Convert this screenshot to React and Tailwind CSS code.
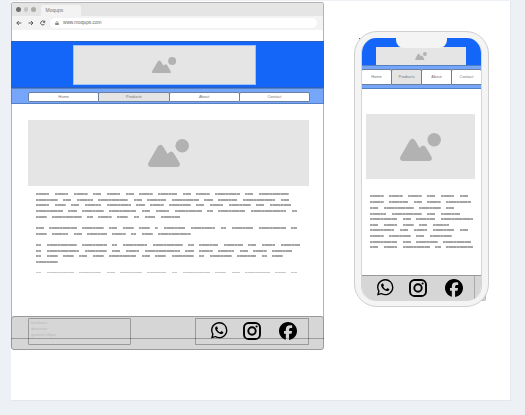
import React from "react";
import { BsWhatsapp } from "react-icons/bs";
import { FaFacebook } from "react-icons/fa6";

const FONT = "font-['Liberation_Sans',Arial,sans-serif]";
const LETTER = 2.722;

// Word lengths of each greeked line; "gap" is the space above the line.
const desktopCopy = [
  { gap: 0, words: [5, 5, 5, 3, 5, 3, 5, 7, 3, 5, 9, 3, 11] },
  { gap: 4, words: [8, 3, 6, 11, 3, 7, 10, 3, 7, 12, 3] },
  { gap: 3, words: [5, 4, 3, 6, 9, 3, 5, 8, 3, 5, 8, 3, 8] },
  { gap: 4, words: [10, 3, 8, 10, 3, 5, 10, 2, 10, 13, 2] },
  { gap: 4, words: [4, 11, 2, 5, 4, 2, 4, 7] },
  { gap: 9, words: [3, 10, 8, 3, 4, 4, 1, 8, 9, 2, 8, 10, 2] },
  { gap: 4, words: [4, 6, 3, 7, 5, 2, 4, 12] },
  { gap: 9, words: [2, 11, 9, 2, 9, 11, 2, 7, 7, 3, 5, 7] },
  { gap: 4, words: [2, 12, 8, 3, 5, 13, 3, 5, 6, 3, 5, 7] },
  { gap: 3, words: [2, 4, 4, 3, 4, 10, 3, 4, 8, 2, 8, 7, 2, 4] },
  { gap: 4, words: [8] },
  { gap: 9, clipped: true, words: [2, 10, 8, 3, 8, 7, 2, 10, 4, 3, 9, 4, 2] },
];

const mobileCopy = [
  { gap: 0, words: [5, 5, 5, 3, 5, 3] },
  { gap: 4, words: [5, 7, 3, 5, 9] },
  { gap: 4, words: [3, 11, 8, 3] },
  { gap: 4, words: [6, 11, 3, 7] },
  { gap: 3, words: [10, 3, 7, 12] },
  { gap: 4, words: [3, 5, 4, 3, 6] },
  { gap: 3, words: [9, 3, 5, 8, 3] },
  { gap: 4, words: [5, 8, 3, 8] },
  { gap: 4, words: [10, 3, 8, 10] },
  { gap: 3, words: [3, 5, 10, 2, 10] },
];

function Greeked({ lines }) {
  return (
    <div className="flex flex-col">
      {lines.map((line, i) => (
        <div
          key={i}
          className={line.clipped ? "flex h-px gap-[5.444px] opacity-60" : "flex h-[2px] gap-[5.444px]"}
          style={{ marginTop: line.gap }}
        >
          {line.words.map((n, j) => (
            <span
              key={j}
              className="h-full shrink-0 bg-[repeating-linear-gradient(90deg,#a4a4a4_0,#a4a4a4_2.2px,#bcbcbc_2.2px,#bcbcbc_2.722px)]"
              style={{ width: n * LETTER }}
            />
          ))}
        </div>
      ))}
    </div>
  );
}

function Picture({ className }) {
  return (
    <svg viewBox="0 0 41 28" className={className} fill="#b2b2b2">
      <circle cx="34.2" cy="6.8" r="6.8" />
      <path d="M.5 23.5 9.3 8.3Q12.5 3.4 15.6 8.3L19.6 15Q23 10.2 26 14.4L31.5 23.8Q33 27.8 29.5 28H3Q-1 27.6.5 23.5Z" />
    </svg>
  );
}

function Instagram() {
  return (
    <svg viewBox="0 0 18 18" className="size-[18px]" fill="none" stroke="#000" strokeWidth="1.9">
      <rect x="1" y="1" width="16" height="16" rx="4.6" />
      <circle cx="9" cy="9" r="3.7" />
      <circle cx="13.6" cy="4.5" r="1.1" fill="#000" stroke="none" />
    </svg>
  );
}

function Social() {
  return (
    <>
      <BsWhatsapp className="size-[16.5px]" color="#000" />
      <div className="ml-[15.5px]">
        <Instagram />
      </div>
      <FaFacebook className="ml-[18px] size-[18px]" color="#000" />
    </>
  );
}

const tabs = ["Home", "Products", "About", "Contact"];

function Tabs({ className }) {
  return (
    <div className={`flex text-[4px] text-[#777] ${className}`}>
      {tabs.map((t) => (
        <div
          key={t}
          className={`flex flex-1 items-center justify-center rounded-t-[2px] rounded-b-[1px] border border-[#6b7f9f] ${
            t === "Products" ? "bg-[#e5e5e5]" : "bg-white"
          } -mr-px leading-none`}
        >
          {t}
        </div>
      ))}
    </div>
  );
}

function Browser() {
  return (
    <section className="relative flex h-[348px] w-[313px] flex-col">
      <div className="flex h-[337px] flex-col rounded-t-[2px] border border-[#b4b4b4] bg-white">
        <div className="flex h-[13px] shrink-0 items-end bg-[#e5e5e5]">
          <div className="flex h-full items-center gap-[3px] pl-1">
            <i className="size-[4.5px] rounded-full bg-[#707070]" />
            <i className="size-[4.5px] rounded-full bg-[#c4c4c4]" />
            <i className="size-[4.5px] rounded-full bg-[#ababab]" />
          </div>
          <div className="ml-[5px] flex h-[11px] w-[40px] items-center rounded-t-[2px] bg-[#f3f3f3] pl-[5px] text-[5px] leading-none text-[#777]">
            Moqups
          </div>
        </div>
        <div className="flex h-[14px] shrink-0 items-center bg-[#f3f3f3] pl-1">
          <svg viewBox="0 0 30 6" className="h-[6px] w-[30px]" fill="none" stroke="#444" strokeWidth=".85">
            <path d="M5.3 3H.8M2.8 1 .8 3l2 2M12.5 3H17M15 1l2 2-2 2M28.3 1.8A2 2 0 1 0 28.5 3.8M28.8.6v1.7h-1.7" />
          </svg>
          <div className="ml-[4px] flex h-[10.5px] w-[267px] items-center rounded-full bg-white pl-[5px] text-[4.75px] leading-none text-[#666]">
            <svg viewBox="0 0 4 5" className="mr-[4px] h-[4.5px] w-[4px]">
              <path d="M0 2h4v3H0z" fill="#888" />
              <path d="M1 2V1.3a1 1 0 0 1 2 0V2" fill="none" stroke="#888" strokeWidth=".6" />
            </svg>
            www.moqups.com
          </div>
        </div>
        <div className="-mx-px mt-[11px] flex h-[47px] shrink-0 border-y border-[#2b5fc0] bg-[#1466f8] pl-[62px] pt-[3px]">
          <div className="flex h-[40px] w-[183px] items-center justify-center border border-[#a5c0f2] bg-[#e5e5e5]">
            <Picture className="h-[16.5px] w-[24.2px]" />
          </div>
        </div>
        <div className="-mx-px h-[16px] shrink-0 border border-[#5580c4] bg-[#75a6f9] pl-[16px] pt-[3px]">
          <Tabs className="h-[10px] w-[281px]" />
        </div>
        <div className="ml-[16.4px] mt-[16px] flex h-[66px] w-[280.8px] shrink-0 items-center justify-center bg-[#e5e5e5]">
          <Picture className="h-[28px] w-[41px]" />
        </div>
        <div className="ml-[23.8px] mt-[7px]">
          <Greeked lines={desktopCopy} />
        </div>
      </div>
      <footer className="-mt-[23px] flex h-[34px] shrink-0 rounded-[3px] border border-[#9a9a9a] bg-[#d6d6d6] pl-[16px] pt-[1px]">
        <div className="h-[27px] w-[103px] rounded-[1px] border border-[#9a9a9a] pl-[2px] pt-[1px] text-[4px] leading-[6px] text-[#b8b8b8]">
          <p>telefoons</p>
          <p>direccion</p>
          <p>general ellgas</p>
        </div>
        <div className="ml-[64px] flex h-[27px] w-[114px] items-start border border-[#9a9a9a] pl-[15px] pt-[3px]">
          <Social />
        </div>
      </footer>
      <div className="absolute inset-x-0 top-[336px] h-px bg-[#00000045]" />
    </section>
  );
}

function Phone() {
  return (
    <section className="relative h-[276px] w-[135px]">
      <i className="absolute left-[5px] top-[7px] size-px bg-[#1466f8]" />
      <i className="absolute bottom-[6px] right-[3px] size-[7px] rounded-br-[2px] border border-[#bbb] bg-[#d6d6d6]" />
      <div className="relative h-full rounded-[23px] border border-[#cfcfcf] bg-[#f4f4f4] px-[6px] pt-[6px]">
        <div className="relative flex h-[263px] flex-col overflow-hidden rounded-[15px] border-x border-[#d5d5d5] bg-white">
          <div className="flex h-[27px] shrink-0 items-end bg-[#1466f8] pl-[14px]">
            <div className="flex h-[18px] w-[90px] items-center justify-center bg-[#e5e5e5]">
              <Picture className="h-[8px] w-[12px]" />
            </div>
          </div>
          <div className="flex h-[24px] shrink-0 items-center border-y border-[#5580c4] bg-[#75a6f9]">
            <Tabs className="-ml-px h-[16px] w-[120px] shrink-0" />
          </div>
          <div className="ml-[4px] mt-[25px] flex h-[65px] w-[109px] shrink-0 items-center justify-center bg-[#e5e5e5]">
            <Picture className="h-[28px] w-[41px]" />
          </div>
          <div className="ml-[8px] mt-[16px]">
            <Greeked lines={mobileCopy} />
          </div>
          <div className="mt-auto flex h-[26px] shrink-0 border-t border-[#999] bg-[#d6d6d6]">
            <div className="flex w-[113px] shrink-0 items-start border-r border-[#aaa] pl-[15px] pt-[3px]">
              <Social />
            </div>
          </div>
          <div className="absolute left-[34px] top-0 h-[10px] w-[51px] rounded-b-[8px] bg-[#f4f4f4]" />
        </div>
      </div>
    </section>
  );
}

export default function App() {
  return (
    <main className={`h-[415px] w-[525px] overflow-hidden bg-[#edf1f6] pl-[11px] pt-px ${FONT}`}>
      <div className="flex h-[400px] w-[500px] items-start border-r border-b border-[#e4e8ec] bg-white pt-px">
        <Browser />
        <div className="ml-[30px] mt-[29px]">
          <Phone />
        </div>
      </div>
    </main>
  );
}
